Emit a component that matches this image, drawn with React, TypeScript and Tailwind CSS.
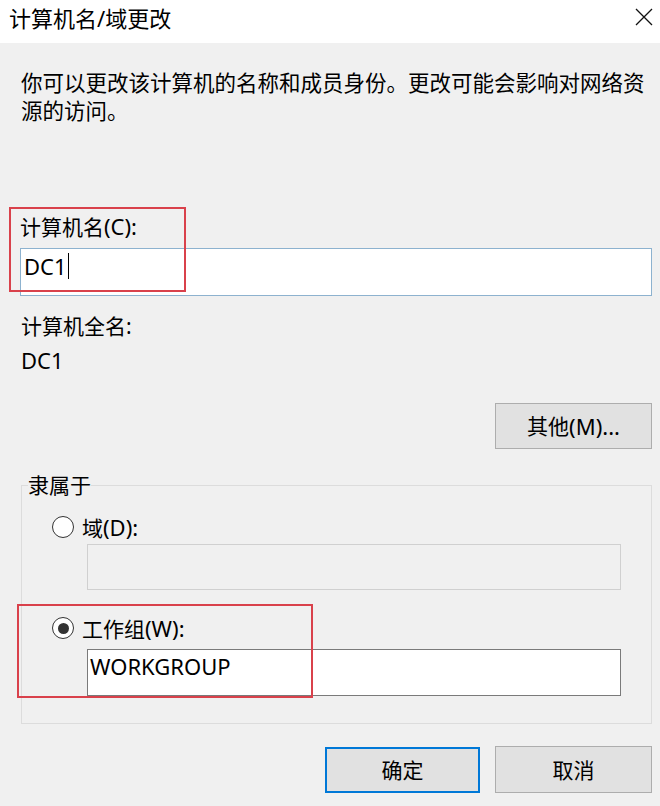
import React from "react";

const Lat = ({ children }: { children: React.ReactNode }) => (
  <span className="text-[22px]">{children}</span>
);

function Radio({ checked }: { checked: boolean }) {
  return (
    <span className="flex h-[22px] w-[22px] shrink-0 items-center justify-center rounded-full border-[1.5px] border-[#333333] bg-white">
      {checked && <span className="h-[11px] w-[11px] rounded-full bg-[#333333]" />}
    </span>
  );
}

export default function App() {
  return (
    <div className="relative h-[806px] w-[660px] overflow-hidden bg-[#f0f0f0] font-['Noto_Sans','Noto_Sans_CJK_SC',sans-serif] text-[21px] leading-[28px] text-black">
      {/* Title bar */}
      <div className="flex h-[43px] items-start justify-between bg-white pl-[9px] pr-[7px]">
        <span className="mt-[4px] text-[22px] leading-[28px]">计算机名/域更改</span>
        <svg className="mt-[8px]" width="18" height="18" viewBox="0 0 18 18" fill="none">
          <path d="M1 1L17 17M17 1L1 17" stroke="#111111" strokeWidth="1.3" />
        </svg>
      </div>

      {/* Description */}
      <div className="mt-[26px] whitespace-nowrap pl-[21px] text-[21.5px]">
        你可以更改该计算机的名称和成员身份。更改可能会影响对网络资
        <br />
        源的访问。
      </div>

      {/* Computer name */}
      <div className="mt-[87px] pl-[20px]">
        计算机名<Lat>(C):</Lat>
      </div>
      <div className="ml-[20px] mr-[8px] mt-[7px] flex h-[48px] items-start border border-[#8db2cf] bg-white pl-[3px] pt-[3px]">
        <Lat>DC1</Lat>
        <span className="ml-[1px] mt-[1px] h-[26px] w-[1px] bg-black" />
      </div>

      <div className="mt-[16px] pl-[21px]">计算机全名:</div>
      <div className="mt-[6px] pl-[21px]">
        <Lat>DC1</Lat>
      </div>

      <div className="mt-[28px] flex justify-end pr-[8px]">
        <button className="flex h-[46px] w-[157px] items-center justify-center border border-[#adadad] bg-[#e1e1e1]">
          其他<Lat>(M)...</Lat>
        </button>
      </div>

      {/* Member of */}
      <fieldset className="ml-[21px] mr-[8px] mt-[22px] border border-[#dcdcdc]">
        <legend className="ml-[6px] leading-[28px]">隶属于</legend>
        <div className="pb-[27px] pl-[30px] pr-[30px] pt-[14px]">
          <div className="flex h-[28px] items-center gap-[8px]">
            <Radio checked={false} />
            <span>
              域<Lat>(D):</Lat>
            </span>
          </div>
          <div className="ml-[35px] mt-[3px] h-[46px] border border-[#d0d0d0] bg-[#f0f0f0]" />
          <div className="mt-[24px] flex h-[28px] items-center gap-[8px]">
            <Radio checked={true} />
            <span>
              工作组<Lat>(W):</Lat>
            </span>
          </div>
          <div className="ml-[35px] mt-[7px] h-[47px] border border-[#7a7a7a] bg-white pl-[2px] pt-[2px]">
            <Lat>WORKGROUP</Lat>
          </div>
        </div>
      </fieldset>

      {/* Bottom buttons */}
      <div className="mt-[23px] flex items-start justify-end gap-[15px] pr-[8px]">
        <button className="flex h-[46px] w-[155px] items-center justify-center border-2 border-[#0078d7] bg-[#e1e1e1]">
          确定
        </button>
        <button className="-mt-[1px] flex h-[47px] w-[157px] items-center justify-center border border-[#adadad] bg-[#e1e1e1]">
          取消
        </button>
      </div>

      {/* Red annotation boxes */}
      <div className="pointer-events-none absolute left-[9px] top-[207px] h-[85px] w-[177px] border-2 border-[#d9414b]" />
      <div className="pointer-events-none absolute left-[17px] top-[604px] h-[94px] w-[296px] border-2 border-[#d9414b]" />
    </div>
  );
}
